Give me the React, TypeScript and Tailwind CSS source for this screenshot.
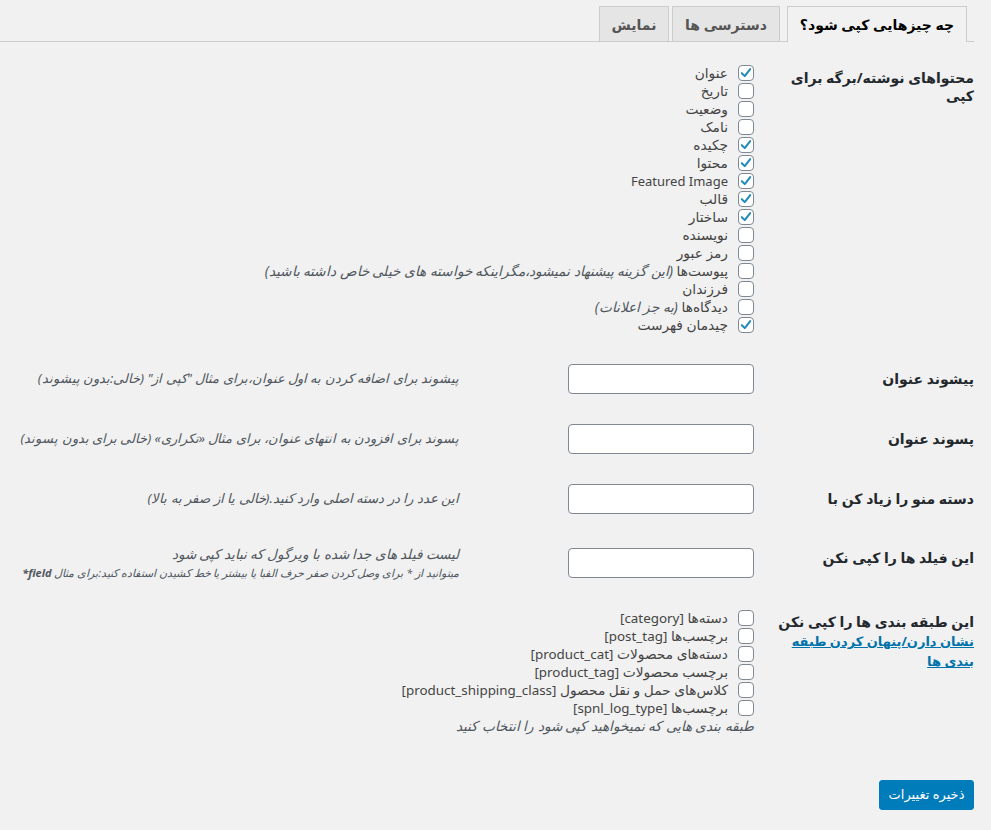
import React from "react";

function Box({ checked }: { checked?: boolean }) {
  return (
    <span className="flex h-[16px] w-[16px] shrink-0 items-center justify-center rounded-[4px] border border-[#7e8993] bg-white">
      {checked ? (
        <svg width="14" height="14" viewBox="0 0 16 16">
          <path d="M3.2 8.2 L6.6 11.6 L12.8 3.6" fill="none" stroke="#1e8cbe" strokeWidth="2.3" strokeLinecap="round" strokeLinejoin="round" />
        </svg>
      ) : null}
    </span>
  );
}

function CheckRow({ checked, children }: { checked?: boolean; children: React.ReactNode }) {
  return (
    <div className="flex h-[18px] items-center gap-[10px] whitespace-nowrap">
      <Box checked={checked} />
      <span className="text-[13.75px]">{children}</span>
    </div>
  );
}

function Th({ children, pt }: { children: React.ReactNode; pt: string }) {
  return (
    <div className={`w-[220px] shrink-0 self-start text-[14px] font-bold leading-[18px] text-[#23282d] ${pt}`}>
      {children}
    </div>
  );
}

function Input() {
  return <div className="h-[30px] w-[186px] shrink-0 rounded-[4px] border border-[#7e8993] bg-white" />;
}

export default function App() {
  const contents: [string, boolean, string?][] = [
    ["عنوان", true],
    ["تاریخ", false],
    ["وضعیت", false],
    ["نامک", false],
    ["چکیده", true],
    ["محتوا", true],
    ["Featured Image", true],
    ["قالب", true],
    ["ساختار", true],
    ["نویسنده", false],
    ["رمز عبور", false],
    ["پیوست‌ها", false, "(این گزینه پیشنهاد نمیشود،مگراینکه خواسته های خیلی خاص داشته باشید)"],
    ["فرزندان", false],
    ["دیدگاه‌ها", false, "(به جز اعلانات)"],
    ["چیدمان فهرست", true],
  ];
  const taxes: [string, string][] = [
    ["دسته‌ها", "[category]"],
    ["برچسب‌ها", "[post_tag]"],
    ["دسته‌های محصولات", "[product_cat]"],
    ["برچسب محصولات", "[product_tag]"],
    ["کلاس‌های حمل و نقل محصول", "[product_shipping_class]"],
    ["برچسب‌ها", "[spnl_log_type]"],
  ];
  return (
    <div
      dir="rtl"
      className="min-h-[830px] w-full bg-[#f1f1f1] pr-[17px] font-['Noto_Sans','DejaVu_Sans',sans-serif] text-[13px] text-[#444]"
    >
      {/* Tabs */}
      <div className="flex h-[42px] items-end border-b border-[#ccc] pt-[6px]">
        <div className="relative -mb-px mr-[7px] flex h-[36px] w-[180px] items-center justify-center border border-b-0 border-[#ccc] bg-[#f1f1f1] pb-px text-[14px] font-bold text-black">
          چه چیزهایی کپی شود؟
        </div>
        <div className="mr-[7px] flex h-[35px] w-[108px] items-center justify-center border border-b-0 border-[#ccc] bg-[#e5e5e5] text-[14px] font-bold text-[#555]">
          دسترسی ها
        </div>
        <div className="mr-[3px] flex h-[35px] w-[70px] items-center justify-center border border-b-0 border-[#ccc] bg-[#e5e5e5] text-[14px] font-bold text-[#555]">
          نمایش
        </div>
      </div>

      {/* Row 1 */}
      <div className="flex pt-[22px]">
        <Th pt="pt-[5px]">
          محتواهای نوشته/برگه برای
          <br />
          کپی
        </Th>
        <div className="flex flex-col">
          {contents.map(([l, c, extra], i) => (
            <CheckRow key={i} checked={c}>
              {/^[A-Za-z]/.test(l) ? <span className="text-[13px]">{l}</span> : l}
              {extra ? <span className="italic text-[#50575e]"> {extra}</span> : null}
            </CheckRow>
          ))}
        </div>
      </div>

      {/* Row prefix */}
      <div className="mt-[30px] flex items-center">
        <Th pt="pt-[6px]">پیشوند عنوان</Th>
        <Input />
        <div className="mr-[109px] whitespace-nowrap italic text-[#50575e]">
          پیشوند برای اضافه کردن به اول عنوان،برای مثال "کپی از" (خالی:بدون پیشوند)
        </div>
      </div>

      {/* Row suffix */}
      <div className="mt-[30px] flex items-center">
        <Th pt="pt-[6px]">پسوند عنوان</Th>
        <Input />
        <div className="mr-[109px] whitespace-nowrap italic text-[#50575e]">
          پسوند برای افزودن به انتهای عنوان، برای مثال «تکراری» (خالی برای بدون پسوند)
        </div>
      </div>

      {/* Row menu order */}
      <div className="mt-[30px] flex items-center">
        <Th pt="pt-[6px]">دسته منو را زیاد کن با</Th>
        <Input />
        <div className="mr-[109px] whitespace-nowrap text-[13.3px] italic text-[#50575e]">
          این عدد را در دسته اصلی وارد کنید.(خالی یا از صفر به بالا)
        </div>
      </div>

      {/* Row fields */}
      <div className="mt-[30px] flex items-center">
        <Th pt="pt-[5px]">این فیلد ها را کپی نکن</Th>
        <Input />
        <div className="mr-[109px] flex flex-col whitespace-nowrap italic text-[#50575e]">
          <span className="text-[13.6px] leading-[19px]">لیست فیلد های جدا شده با ویرگول که نباید کپی شود</span>
          <span className="text-[11px] leading-[19px]">
            میتوانید از * برای وصل کردن صفر حرف الفبا یا بیشتر یا خط کشیدن استفاده کنید:برای مثال <b>field*</b>
          </span>
        </div>
      </div>

      {/* Row taxonomies */}
      <div className="mt-[27px] flex">
        <div className="w-[220px] shrink-0 pt-[3px] text-[14px] font-bold leading-[19px] text-[#23282d]">
          <div>این طبقه بندی ها را کپی نکن</div>
          <a href="#" className="text-[13px] font-bold text-[#0073aa] underline">
            نشان دارن/پنهان کردن طبقه
            <br />
            بندی ها
          </a>
        </div>
        <div className="flex flex-col">
          {taxes.map(([a, b], i) => (
            <CheckRow key={i}>
              {a} <span className="text-[13.4px]">{b}</span>
            </CheckRow>
          ))}
          <div className="h-[18px] whitespace-nowrap text-[13.7px] italic leading-[18px] text-[#50575e]">
            طبقه بندی هایی که نمیخواهید کپی شود را انتخاب کنید
          </div>
        </div>
      </div>

      {/* Save */}
      <div className="mt-[45px] flex">
        <button className="h-[30px] w-[95px] rounded-[3px] border border-[#007cba] bg-[#007cba] text-[13px] text-white">
          ذخیره تغییرات
        </button>
      </div>
    </div>
  );
}
